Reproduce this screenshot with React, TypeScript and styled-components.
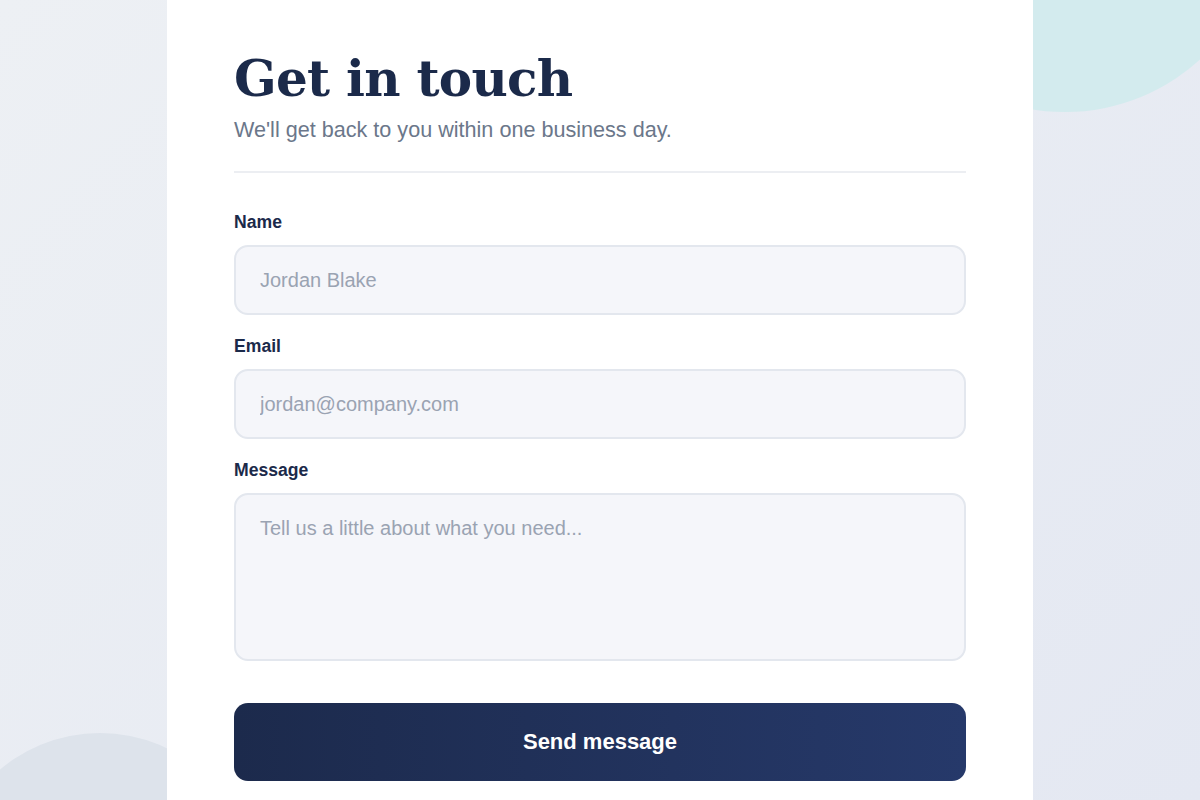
import { FC } from "react"
import styled, { createGlobalStyle } from "styled-components";

const GlobalStyle = createGlobalStyle`
  * { box-sizing: border-box; }
  html, body { margin: 0; padding: 0; }
  body {
    font-family: "Liberation Sans", Arial, sans-serif;
    background: linear-gradient(135deg, #edf0f4 0%, #e4e8f2 100%);
    min-height: 100vh;
    overflow: hidden;
  }
`

const fields = [
  { label: "Name", placeholder: "Jordan Blake" },
  { label: "Email", placeholder: "jordan@company.com" },
]

const App: FC = () => {
  return (
    <>
      <GlobalStyle />
      <Page>
        <TealBlob />
        <GrayBlob />
        <Card>
          <Title>Get in touch</Title>
          <Subtitle>We'll get back to you within one business day.</Subtitle>
          <Divider />
          <Form onSubmit={(e) => e.preventDefault()}>
            {fields.map((f) => (
              <Field key={f.label}>
                <Label>{f.label}</Label>
                <Input placeholder={f.placeholder} />
              </Field>
            ))}
            <Field>
              <Label>Message</Label>
              <TextArea placeholder="Tell us a little about what you need..." />
            </Field>
            <Button type="submit">Send message</Button>
          </Form>
        </Card>
      </Page>
    </>
  )
}

export default App

const Page = styled.div`
  position: relative;
  height: 100vh;
  overflow: hidden;
  display: flex;
  justify-content: center;
  align-items: flex-start;
`
const TealBlob = styled.div`
  position: absolute;
  left: 865px;
  top: -288px;
  width: 400px;
  height: 400px;
  border-radius: 50%;
  background: #d3ebee;
`
const GrayBlob = styled.div`
  position: absolute;
  left: -55px;
  top: 733px;
  width: 310px;
  height: 310px;
  border-radius: 50%;
  background: #dde3eb;
`
const Card = styled.div`
  position: relative;
  width: 866px;
  background: #ffffff;
  padding: 49px 67px 40px;
`
const Title = styled.h1`
  margin: 0;
  font-family: "DejaVu Serif", Georgia, serif;
  font-weight: 700;
  font-size: 50px;
  letter-spacing: -0.75px;
  line-height: 1.2;
  color: #1b2a4a;
`
const Subtitle = styled.p`
  margin: 8px 0 0;
  font-size: 21.6px;
  color: #6b778a;
`
const Divider = styled.hr`
  border: none;
  height: 2px;
  background: #eceef2;
  margin: 28px 0 39px;
`
const Form = styled.form`
  display: flex;
  flex-direction: column;
  gap: 21px;
`
const Field = styled.div`
  display: flex;
  flex-direction: column;
  gap: 12px;
`
const Label = styled.label`
  font-size: 17.6px;
  font-weight: 700;
  color: #1b2a4a;
`
const Input = styled.input`
  height: 70px;
  padding: 0 24px;
  border: 2px solid #e3e7ee;
  border-radius: 14px;
  background: #f5f6fa;
  font-family: inherit;
  font-size: 20px;
  color: #1b2a4a;
  outline: none;
  &::placeholder { color: #9aa3b2; }
`
const TextArea = styled.textarea`
  height: 168px;
  padding: 22px 24px;
  border: 2px solid #e3e7ee;
  border-radius: 14px;
  background: #f5f6fa;
  font-family: inherit;
  font-size: 20px;
  color: #1b2a4a;
  resize: none;
  outline: none;
  &::placeholder { color: #9aa3b2; }
`
const Button = styled.button`
  margin-top: 21px;
  height: 78px;
  border: none;
  border-radius: 14px;
  background: linear-gradient(90deg, #1c2a4c 0%, #26396a 100%);
  color: #ffffff;
  font-family: inherit;
  font-size: 22px;
  font-weight: 700;
  cursor: pointer;
`
